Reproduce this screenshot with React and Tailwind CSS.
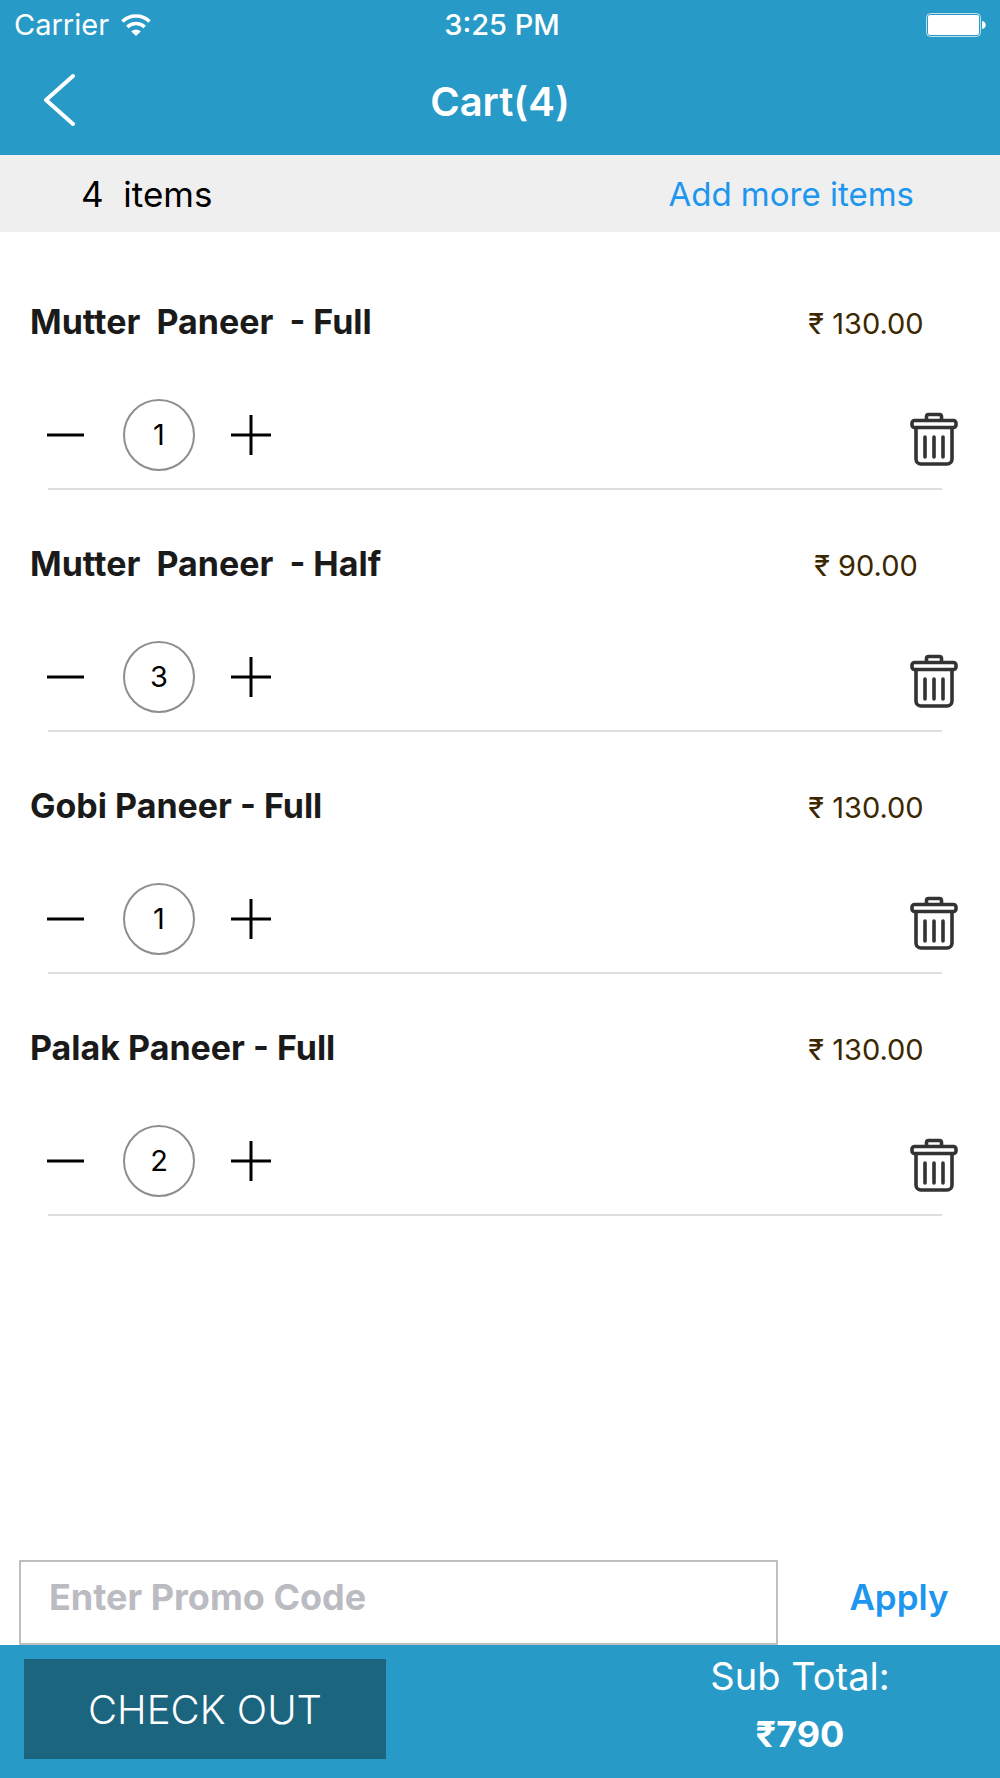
import React, { useState } from 'react';

const initialItems = [
  { id: 1, name: 'Mutter  Paneer  - Full', price: '130.00', qty: 1 },
  { id: 2, name: 'Mutter  Paneer  - Half', price: '90.00', qty: 3 },
  { id: 3, name: 'Gobi Paneer - Full', price: '130.00', qty: 1 },
  { id: 4, name: 'Palak Paneer - Full', price: '130.00', qty: 2 },
];

const WifiIcon = () => (
  <svg width="30" height="22" viewBox="0 0 30 22" fill="none" stroke="#fff" strokeWidth="3.6">
    <path d="M1.5 7.5a19.5 19.5 0 0 1 27 0" />
    <path d="M6.3 13a12.5 12.5 0 0 1 17.4 0" />
    <path d="M15 22l-4.8-4.600a7 7 0 0 1 9.600 0z" fill="#fff" stroke="none" />
  </svg>
);

const BatteryIcon = () => (
  <svg width="60" height="24" viewBox="0 0 60 24">
    <rect x="0.5" y="0.5" width="54" height="23" rx="4" fill="none" stroke="#fff" strokeOpacity="0.7" />
    <rect x="2" y="2" width="51" height="20" rx="2" fill="#fff" />
    <path d="M56 8c5 0.8 5 7.2 0 8z" fill="#fff" />
  </svg>
);

const BackIcon = () => (
  <svg width="32" height="54" viewBox="0 0 32 54" fill="none" stroke="#fff" strokeWidth="4" strokeLinecap="round" strokeLinejoin="round">
    <path d="M30 3L3 27l27 24" />
  </svg>
);

const TrashIcon = () => (
  <svg width="48" height="54" viewBox="0 0 48 54" fill="none" stroke="#333" strokeWidth="3.6" strokeLinecap="round" strokeLinejoin="round">
    <rect x="2" y="8.5" width="44" height="7" rx="2.5" />
    <path d="M16.5 8V4.500a2 2 0 0 1 2-2h11a2 2 0 0 1 2 2V8" />
    <path d="M6 16v31a5 5 0 0 0 5 5h26a5 5 0 0 0 5-5V16" />
    <path d="M15 25v20M24 25v20M33 25v20" />
  </svg>
);

const CartRow = ({ item, onChange, onRemove }) => (
  <li className="pt-14">
    <div className="flex h-9 items-baseline justify-between pl-[30px]">
      <h2 className="text-[34px] leading-9 font-bold text-[#1a1a1a] whitespace-pre">{item.name}</h2>
      <span className="w-[268px] text-center text-[29px] leading-9 text-[#3c2800]">₹ {item.price}</span>
    </div>

    <div className="mt-[59px] flex items-center justify-between pl-[45px] pr-[42px]">
      <div className="flex items-center">
        <button type="button" aria-label="Decrease quantity" onClick={() => onChange(item.id, -1)}>
          <svg width="40" height="40" viewBox="0 0 40 40" stroke="#000" strokeWidth="3">
            <path d="M2 20h37" />
          </svg>
        </button>
        <span className="ml-[38px] mr-9 flex h-[72px] w-[72px] items-center justify-center rounded-full border-2 border-[#8e8e8e] text-[29px] text-black">
          {item.qty}
        </span>
        <button type="button" aria-label="Increase quantity" onClick={() => onChange(item.id, 1)}>
          <svg width="40" height="40" viewBox="0 0 40 40" stroke="#000" strokeWidth="3">
            <path d="M0 20h40M20 0v40" />
          </svg>
        </button>
      </div>
      <button type="button" className="mt-2" aria-label={`Remove ${item.name}`} onClick={() => onRemove(item.id)}>
        <TrashIcon />
      </button>
    </div>

    <div className="mt-[17px] ml-12 mr-[58px] h-[2px] bg-[#dedede]"></div>
  </li>
);

export default function App() {
  const [items, setItems] = useState(initialItems);
  const [promo, setPromo] = useState('');

  const changeQty = (id, step) => {
    setItems(prev => prev.map(i => (i.id === id ? { ...i, qty: Math.max(1, i.qty + step) } : i)));
  };

  const removeItem = (id) => setItems(prev => prev.filter(i => i.id !== id));

  const subTotal = items.reduce((sum, i) => sum + i.qty * parseFloat(i.price), 0);

  return (
    <div className="flex min-h-screen flex-col bg-white font-['Inter',sans-serif]">
      {/* Header */}
      <header className="bg-[#289ac7] text-white">
        <div className="grid h-[50px] grid-cols-3 items-center px-[14px] text-[29px] leading-9">
          <div className="flex items-center gap-3">
            <span>Carrier</span>
            <WifiIcon />
          </div>
          <span className="pl-1 text-center font-medium">3:25 PM</span>
          <div className="flex justify-end">
            <BatteryIcon />
          </div>
        </div>
        <div className="grid h-[105px] grid-cols-3 items-center pb-[2px]">
          <button type="button" aria-label="Back" className="mb-1 ml-[43px] justify-self-start">
            <BackIcon />
          </button>
          <h1 className="text-center text-[40px] leading-none font-semibold">Cart(4)</h1>
        </div>
      </header>

      <div className="flex h-[77px] items-center justify-between bg-[#efefef] pl-[81px] pr-[86px]">
        <p className="whitespace-pre text-[35px] leading-9 text-black">{items.length}  items</p>
        <a href="#menu" className="text-[33px] leading-9 text-[#1c96ee]">Add more items</a>
      </div>

      {/* Items */}
      <ul className="flex-1 pt-4">
        {items.map(item => (
          <CartRow key={item.id} item={item} onChange={changeQty} onRemove={removeItem} />
        ))}
      </ul>

      {/* Promo code */}
      <form className="flex items-start pl-[19px]" onSubmit={e => e.preventDefault()}>
        <input
          type="text"
          aria-label="Promo code"
          placeholder="Enter Promo Code"
          value={promo}
          onChange={e => setPromo(e.target.value)}
          className="h-[85px] min-w-0 flex-1 border-2 border-[#bfbfbf] pl-7 pb-3 text-[36px] font-bold text-black outline-none placeholder:text-[#bbbbc2]"
        />
        <button type="submit" className="w-[222px] pt-[19px] pl-5 text-[35px] leading-9 font-semibold text-[#1c96ee]">Apply</button>
      </form>

      <footer className="flex h-[133px] items-start justify-between bg-[#289ac7] pl-6 text-white">
        <button type="button" className="mt-[14px] h-[100px] w-[362px] bg-[#1c657f] pt-[2px] text-[40px] font-light">CHECK OUT</button>
        <div className="flex w-[400px] flex-col gap-[22px] pt-[13px] text-center">
          <span className="text-[38px] leading-9">Sub Total:</span>
          <span className="text-[36px] leading-9 font-bold">₹{subTotal}</span>
        </div>
      </footer>
    </div>
  );
}
